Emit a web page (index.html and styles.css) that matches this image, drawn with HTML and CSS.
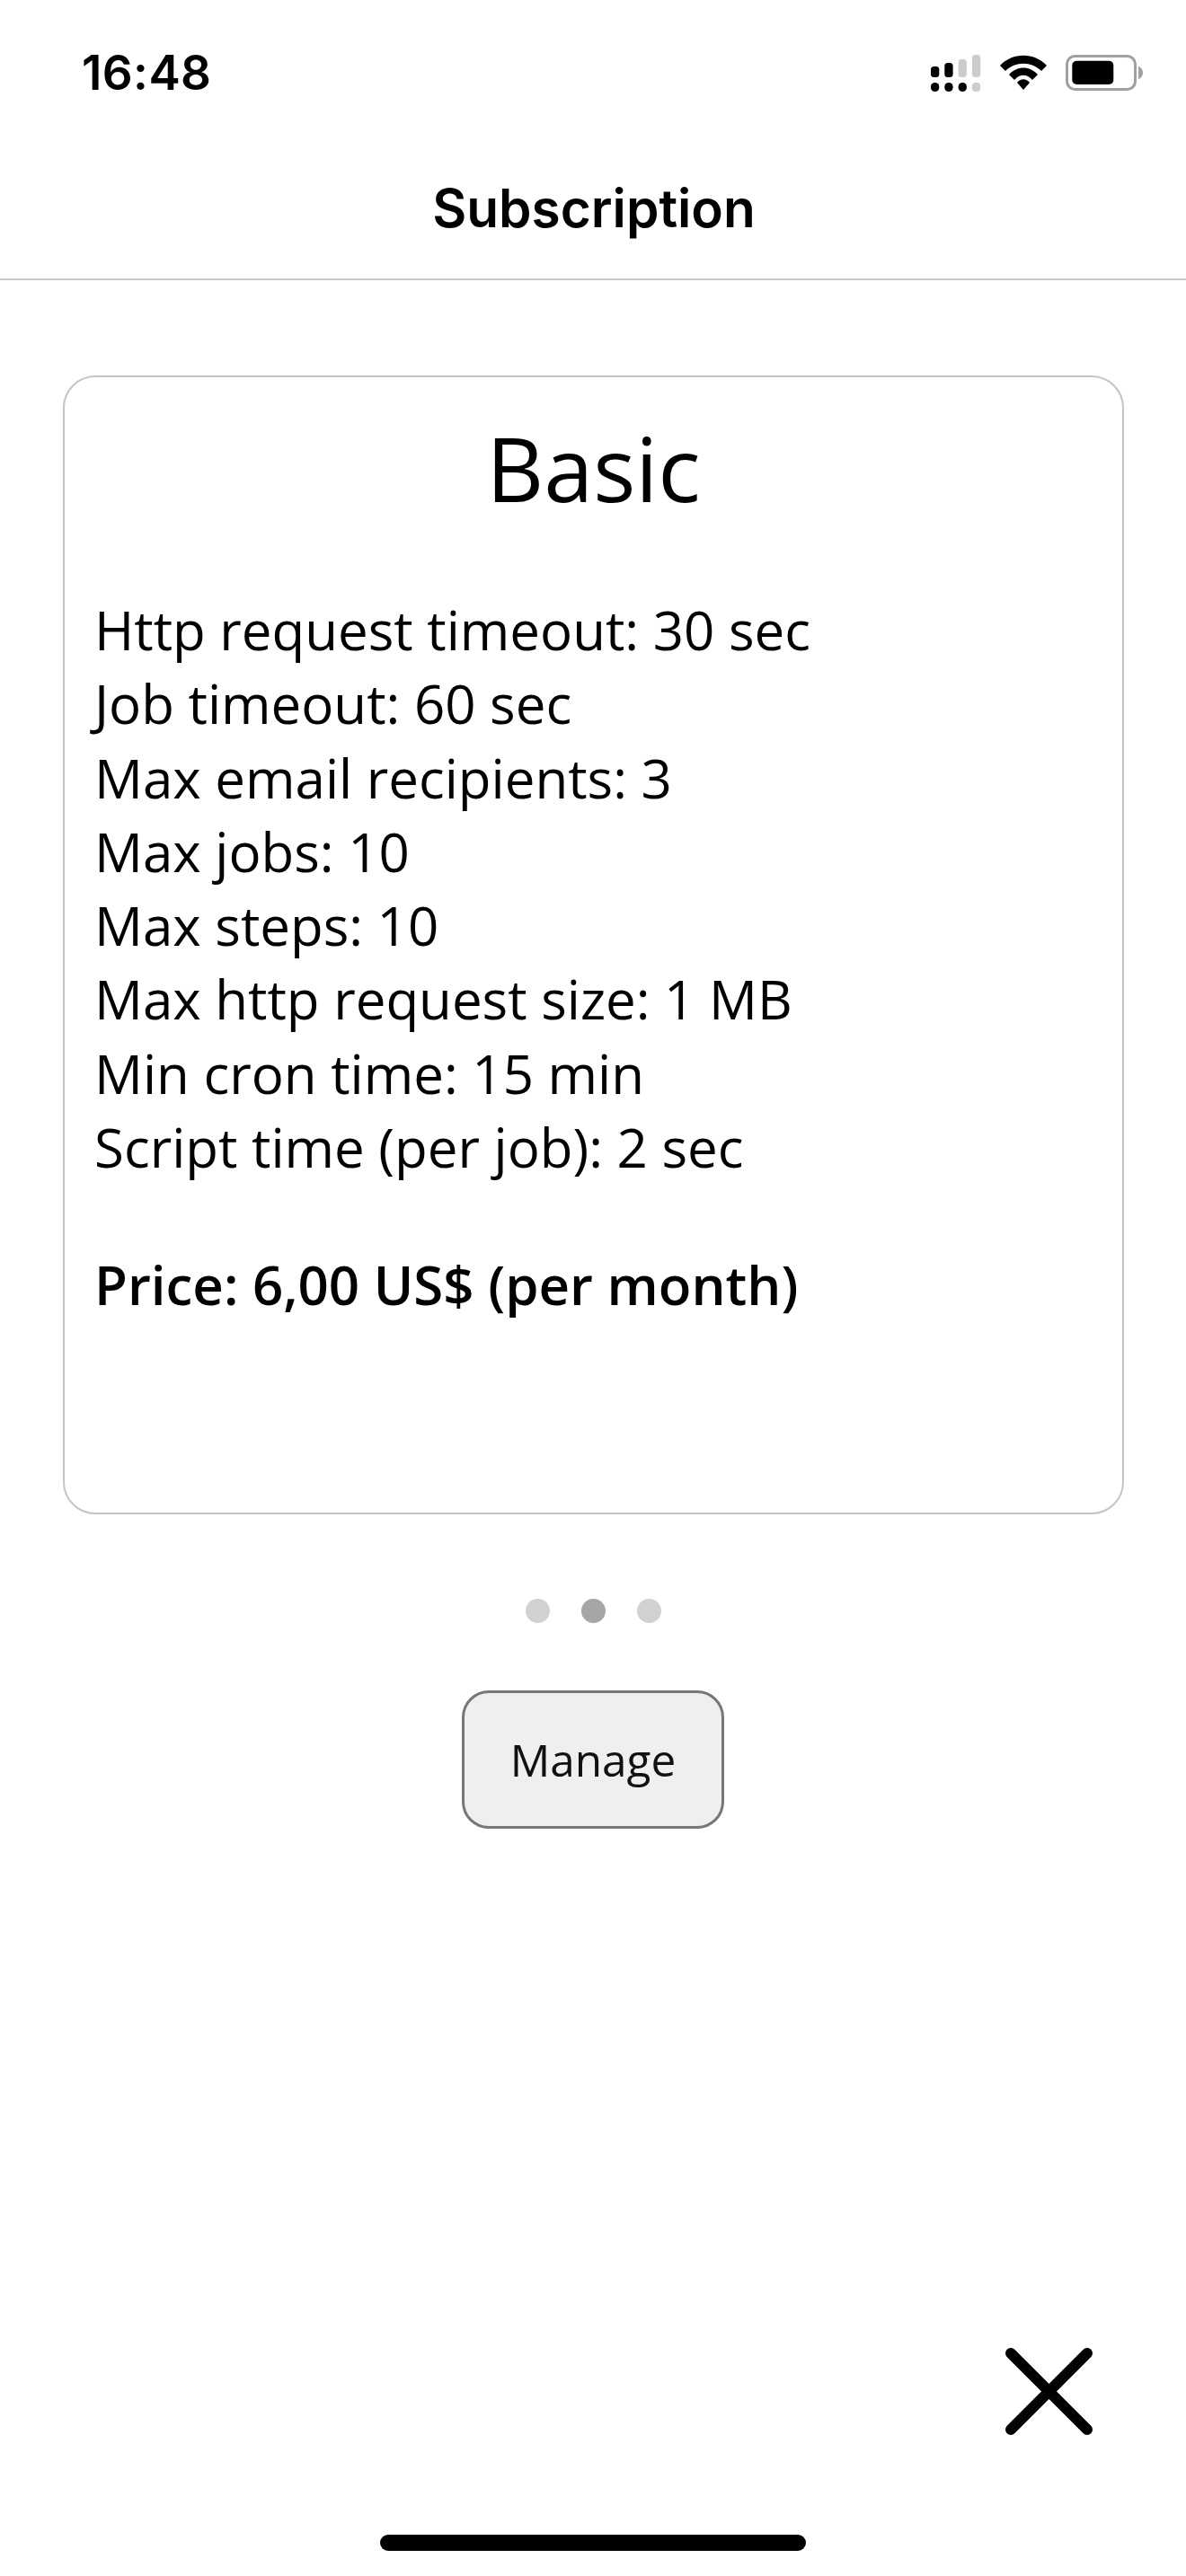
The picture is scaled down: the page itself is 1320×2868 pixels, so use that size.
FILE: index.html
```html
<!DOCTYPE html>
<html lang="en">
<head>
<meta charset="utf-8">
<title>Subscription</title>
<link rel="stylesheet" href="styles.css">
</head>
<body>
<div class="page">
  <div class="status">
    <span class="time">16:48</span>
    <div class="status-icons">
      <svg class="signal" width="56" height="41" viewBox="0 0 56 41">
        <g fill="#000">
          <rect x="0" y="13" width="9.3" height="12" rx="3.5"/><rect x="15.3" y="9" width="9.3" height="16" rx="3.5"/>
          <rect x="0" y="31" width="9.3" height="10" rx="4.5"/><rect x="15.3" y="31" width="9.3" height="10" rx="4.5"/><rect x="30.6" y="31" width="9.3" height="10" rx="4.5"/>
        </g>
        <g fill="#ccc">
          <rect x="30.6" y="5" width="9.3" height="20" rx="3.5"/><rect x="45.9" y="0" width="9.3" height="25" rx="3.5"/>
          <rect x="45.9" y="31" width="9.3" height="10" rx="4"/>
        </g>
      </svg>
      <svg class="wifi" width="54" height="40" viewBox="0 0 54 40">
        <path d="M1 12 C15 -3 39 -3 53 12 L47 18 C36 7 18 7 7 18 Z M11 22 C20 12 34 12 43 22 L37 28 C31 21 23 21 17 28 Z M20 31 C24 26 30 26 34 31 L27 39 Z" fill="#000"/>
      </svg>
      <svg class="battery" width="86" height="40" viewBox="0 0 86 40">
        <rect x="1.5" y="1.5" width="76" height="37" rx="9" fill="none" stroke="#a0a0a0" stroke-width="3"/>
        <rect x="7.3" y="6.7" width="46" height="26.3" rx="5" fill="#000"/>
        <path d="M81 13 C85 14 86 18 86 20 C86 22 85 26 81 27 Z" fill="#a0a0a0"/>
      </svg>
    </div>
  </div>
  <header class="nav"><h1 class="nav-title">Subscription</h1></header>
  <main class="content">
    <section class="card">
      <h2 class="plan">Basic</h2>
      <ul class="features">
        <li>Http request timeout: 30 sec</li>
        <li>Job timeout: 60 sec</li>
        <li>Max email recipients: 3</li>
        <li>Max jobs: 10</li>
        <li>Max steps: 10</li>
        <li>Max http request size: 1 MB</li>
        <li>Min cron time: 15 min</li>
        <li>Script time (per job): 2 sec</li>
      </ul>
      <p class="price">Price: 6,00 US$ (per month)</p>
    </section>
    <div class="dots"><span class="dot"></span><span class="dot dot-active"></span><span class="dot"></span></div>
    <button class="manage">Manage</button>
  </main>
  <div class="close-row">
    <svg width="97" height="97" viewBox="0 0 97 97"><path d="M6 6 L91 91 M91 6 L6 91" stroke="#000" stroke-width="12" stroke-linecap="round"/></svg>
  </div>
  <div class="home-row"><div class="home-bar"></div></div>
</div>
</body>
</html>
```
FILE: styles.css
```css
* { box-sizing: border-box; }
html, body { margin: 0; padding: 0; background: #fff; }
.page { width: 1320px; height: 2868px; display: flex; flex-direction: column; font-family: "Open Sans", sans-serif; color: #000; overflow: hidden; }
.status { height: 160px; display: flex; justify-content: space-between; align-items: flex-start; padding: 53px 48px 0 91px; }
.time { font-family: Inter, "Liberation Sans", sans-serif; font-weight: 600; font-size: 53px; line-height: 56px; letter-spacing: 0.4px; }
.status-icons { display: flex; align-items: flex-start; gap: 20px; padding-top: 8px; }
.nav { height: 152px; border-bottom: 2px solid #c8c8c8; display: flex; justify-content: center; padding: 40px 0 0 2px; }
.nav-title { margin: 0; font-family: Inter, "Liberation Sans", sans-serif; font-weight: 600; font-size: 58.5px; line-height: 64px; }
.content { display: flex; flex-direction: column; align-items: center; padding-top: 106px; }
.card { width: 1181px; height: 1268px; margin-left: 1px; border: 2px solid #c4c4c4; border-radius: 36px; padding: 37px 33px 0; }
.plan { margin: 0; text-align: center; font-weight: 400; font-size: 99px; line-height: 128px; }
.features { list-style: none; margin: 75px 0 0; padding: 0; font-size: 60px; line-height: 82.3px; }
.price { margin: 71px 0 0; font-weight: 600; font-size: 60px; line-height: 82px; }
.dots { display: flex; gap: 35px; margin-top: 94px; }
.dot { width: 27px; height: 27px; border-radius: 50%; background: #d1d1d1; }
.dot-active { background: #a6a6a6; }
.manage { margin-top: 75px; width: 292px; height: 154px; background: #efefef; border: 3px solid #777; border-radius: 30px; font-family: "Open Sans", sans-serif; font-size: 49.5px; color: #111; padding: 0; }
.close-row { margin-top: auto; display: flex; justify-content: flex-end; padding-right: 104px; }
.home-row { height: 157px; display: flex; justify-content: center; padding-top: 111px; }
.home-bar { width: 474px; height: 18px; border-radius: 9px; background: #000; }
```
